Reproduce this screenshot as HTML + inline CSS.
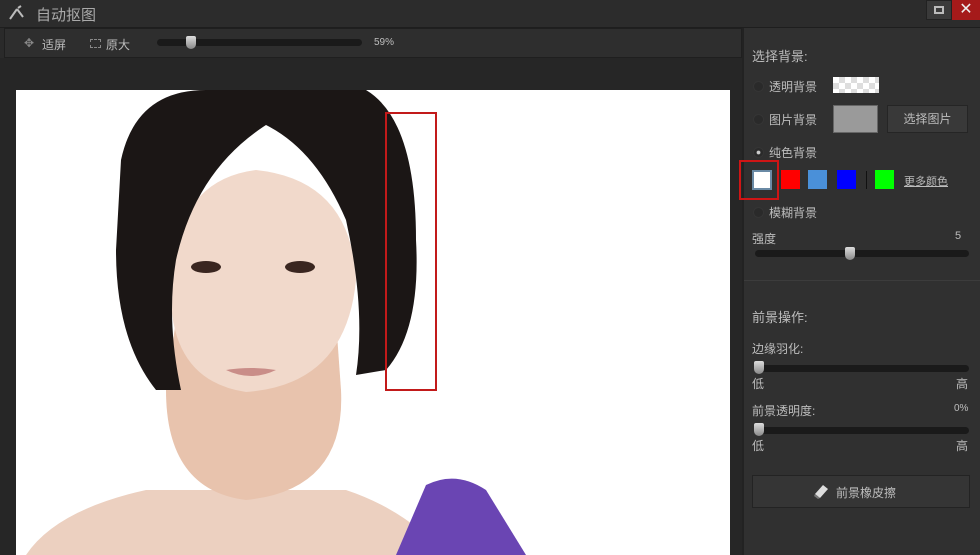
<!DOCTYPE html>
<html><head><meta charset="utf-8"><style>
*{margin:0;padding:0;box-sizing:border-box}
body{width:980px;height:555px;overflow:hidden;background:#2a2a2a;font-family:"Liberation Sans","Noto Sans CJK SC",sans-serif;color:#c8c8c8;font-size:12px;position:relative}
.a{position:absolute}
.t{color:#bdbdbd;font-size:12px;white-space:nowrap}
.radio{width:11px;height:11px;border-radius:50%;background:#2a2a2a;border:1px solid #353535}
.track{height:7px;background:#1a1a1a;border-radius:4px}
.thumb{width:10px;height:13px;background:linear-gradient(#ddd,#888);border-radius:2px 2px 5px 5px}
</style></head><body>
<div class="a" style="left:0;top:0;width:980px;height:28px;background:#2c2c2c;border-bottom:1px solid #1e1e1e"></div>
<svg class="a" style="left:8px;top:5px" width="18" height="16"><path d="M2 14 L9 4 M9 4 L15 12 M10 3 L13 1" stroke="#bbb" stroke-width="2" fill="none"/></svg>
<div class="a t" style="left:36px;top:4px;font-size:15px;color:#aaa">自动抠图</div>
<div class="a" style="left:926px;top:0;width:26px;height:20px;background:#3a3a3a;border:1px solid #222"><div style="margin:5px auto;width:10px;height:8px;border:2px solid #bbb"></div></div>
<div class="a" style="left:952px;top:0;width:28px;height:20px;background:#a51a1a;color:#eee;text-align:center;font-size:16px;line-height:20px">✕</div>
<div class="a" style="left:4px;top:28px;width:738px;height:30px;background:#2e2e2e;border:1px solid #1f1f1f"></div>
<div class="a t" style="left:24px;top:36px;color:#888">✥</div>
<div class="a t" style="left:42px;top:36px">适屏</div>
<div class="a" style="left:90px;top:39px;width:11px;height:9px;border:1px dashed #888"></div>
<div class="a t" style="left:106px;top:36px">原大</div>
<div class="a track" style="left:157px;top:39px;width:205px"></div>
<div class="a thumb" style="left:186px;top:36px"></div>
<div class="a t" style="left:374px;top:37px;font-size:10px">59%</div>
<div class="a" style="left:0;top:58px;width:743px;height:497px;background:#262626"></div>
<svg class="a" style="left:16px;top:90px" width="714" height="465">
<rect width="714" height="465" fill="#fff"/>
<path d="M10 465 Q40 420 130 400 L330 400 Q390 420 430 465Z" fill="#ecd0c0"/>
<path d="M150 300 Q150 400 230 410 Q330 400 325 300 L320 230 L160 230Z" fill="#e8c3ad"/>
<path d="M155 190 Q150 290 230 302 Q330 295 340 190 Q335 90 240 80 Q160 90 155 190Z" fill="#f1d9cb"/>
<path d="M105 70 Q120 0 190 0 L350 0 Q400 30 400 150 Q405 240 370 280 L340 285 Q350 220 330 130 Q300 60 250 35 Q180 80 160 170 Q150 230 165 300 L140 300 Q100 250 100 160Z" fill="#1b1615"/>
<path d="M410 395 Q440 380 470 400 L510 465 L380 465Z" fill="#6a45b3"/>
<ellipse cx="190" cy="177" rx="15" ry="6" fill="#3a2620"/><ellipse cx="284" cy="177" rx="15" ry="6" fill="#3a2620"/>
<path d="M210 280 Q235 292 260 280 Q235 276 210 280Z" fill="#c98d88"/>
</svg>
<div class="a" style="left:385px;top:112px;width:52px;height:279px;border:2px solid #c21a1a"></div>
<div class="a" style="left:742px;top:28px;width:238px;height:527px;background:#303030;border-left:2px solid #222"></div>
<div class="a t" style="left:752px;top:46px;font-size:13px">选择背景:</div>
<div class="a radio" style="left:753px;top:81px"></div><div class="a t" style="left:769px;top:78px">透明背景</div>
<div class="a" style="left:833px;top:77px;width:46px;height:16px;background:repeating-conic-gradient(#ddd 0 25%,#fff 0 50%) 0 0/12px 12px"></div>
<div class="a radio" style="left:753px;top:114px"></div><div class="a t" style="left:769px;top:111px">图片背景</div>
<div class="a" style="left:833px;top:105px;width:45px;height:28px;background:#9a9a9a;border:1px solid #666"></div>
<div class="a" style="left:887px;top:105px;width:81px;height:28px;background:#393939;border:1px solid #252525;text-align:center;line-height:26px" ><span class="t">选择图片</span></div>
<div class="a radio" style="left:753px;top:147px;background:radial-gradient(#ccc 25%,#2a2a2a 35%)"></div><div class="a t" style="left:769px;top:144px">纯色背景</div>
<div class="a" style="left:739px;top:160px;width:40px;height:40px;border:2px solid #d01515"></div>
<div class="a" style="left:752px;top:170px;width:20px;height:20px;background:#fff;border:2px solid #6a8aa5"></div>
<div class="a" style="left:781px;top:170px;width:19px;height:19px;background:#f00"></div>
<div class="a" style="left:808px;top:170px;width:19px;height:19px;background:#4a90d9"></div>
<div class="a" style="left:837px;top:170px;width:19px;height:19px;background:#00f"></div>
<div class="a" style="left:866px;top:171px;width:1px;height:18px;background:#111"></div>
<div class="a" style="left:875px;top:170px;width:19px;height:19px;background:#0f0"></div>
<div class="a t" style="left:904px;top:173px;font-size:11px;text-decoration:underline">更多颜色</div>
<div class="a radio" style="left:753px;top:207px"></div><div class="a t" style="left:769px;top:204px">模糊背景</div>
<div class="a t" style="left:752px;top:230px">强度</div><div class="a t" style="left:955px;top:230px;font-size:11px">5</div>
<div class="a track" style="left:755px;top:250px;width:214px"></div>
<div class="a thumb" style="left:845px;top:247px"></div>
<div class="a" style="left:744px;top:280px;width:236px;height:1px;background:#3c3c3c"></div>
<div class="a t" style="left:752px;top:307px;font-size:13px">前景操作:</div>
<div class="a t" style="left:752px;top:340px">边缘羽化:</div>
<div class="a track" style="left:755px;top:365px;width:214px"></div>
<div class="a thumb" style="left:754px;top:361px"></div>
<div class="a t" style="left:752px;top:375px">低</div><div class="a t" style="left:956px;top:375px">高</div>
<div class="a t" style="left:752px;top:402px">前景透明度:</div><div class="a t" style="left:954px;top:403px;font-size:10px">0%</div>
<div class="a track" style="left:755px;top:427px;width:214px"></div>
<div class="a thumb" style="left:754px;top:423px"></div>
<div class="a t" style="left:752px;top:437px">低</div><div class="a t" style="left:956px;top:437px">高</div>
<div class="a" style="left:752px;top:475px;width:218px;height:33px;background:#353535;border:1px solid #232323"></div>
<svg class="a" style="left:812px;top:482px" width="18" height="18"><path d="M3 12 L11 3 L16 7 L8 16Z" fill="#ddd"/><path d="M3 12 L8 16 L6 17 L2 14Z" fill="#777"/></svg>
<div class="a t" style="left:836px;top:484px">前景橡皮擦</div>
</body></html>
